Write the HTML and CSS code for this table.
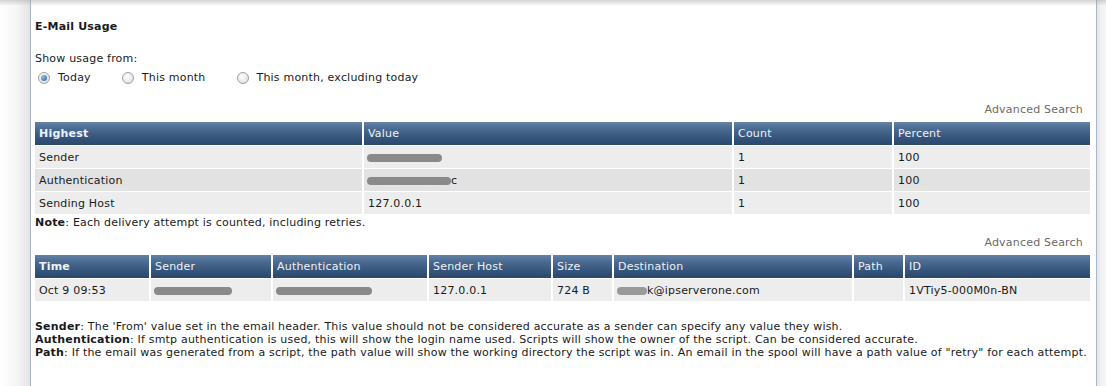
FILE: index.html
```html
<!DOCTYPE html>
<html>
<head>
<meta charset="utf-8">
<link rel="stylesheet" href="styles.css">
</head>
<body>
<div class="page">
  <div class="gutter-left"></div>
  <div class="panel">
    <div class="title">E-Mail Usage</div>
    <div class="label">Show usage from:</div>
    <div class="radios">
      <label class="radio"><span class="dot checked"></span>Today</label>
      <label class="radio"><span class="dot"></span>This month</label>
      <label class="radio"><span class="dot"></span>This month, excluding today</label>
    </div>
    <div class="adv">Advanced Search</div>
    <table class="grid t1">
      <thead>
        <tr><th class="b w1">Highest</th><th class="w2">Value</th><th class="w3">Count</th><th>Percent</th></tr>
      </thead>
      <tbody>
        <tr><td>Sender</td><td><span class="blur" style="width:75px"></span></td><td>1</td><td>100</td></tr>
        <tr class="alt"><td>Authentication</td><td><span class="blur" style="width:84px"></span><span class="tail">c</span></td><td>1</td><td>100</td></tr>
        <tr><td>Sending Host</td><td>127.0.0.1</td><td>1</td><td>100</td></tr>
      </tbody>
    </table>
    <div class="note"><b>Note</b>: Each delivery attempt is counted, including retries.</div>
    <div class="adv adv2">Advanced Search</div>
    <table class="grid t2">
      <thead>
        <tr><th class="b c1">Time</th><th class="c2">Sender</th><th class="c3">Authentication</th><th class="c4">Sender Host</th><th class="c5">Size</th><th class="c6">Destination</th><th class="c7">Path</th><th>ID</th></tr>
      </thead>
      <tbody>
        <tr><td>Oct 9 09:53</td><td><span class="blur" style="width:78px"></span></td><td><span class="blur" style="width:96px"></span></td><td>127.0.0.1</td><td>724 B</td><td><span class="blur short" style="width:30px"></span>k@ipserverone.com</td><td></td><td>1VTiy5-000M0n-BN</td></tr>
      </tbody>
    </table>
    <div class="legend">
      <div><b>Sender</b>: The 'From' value set in the email header. This value should not be considered accurate as a sender can specify any value they wish.</div>
      <div><b>Authentication</b>: If smtp authentication is used, this will show the login name used. Scripts will show the owner of the script. Can be considered accurate.</div>
      <div><b>Path</b>: If the email was generated from a script, the path value will show the working directory the script was in. An email in the spool will have a path value of "retry" for each attempt.</div>
    </div>
  </div>
  <div class="gutter-right"></div>
</div>
</body>
</html>
```
FILE: styles.css
```css
html, body {
  margin: 0;
  padding: 0;
  background: #ffffff;
}
body {
  font-family: "DejaVu Sans", Verdana, sans-serif;
  font-size: 11px;
  letter-spacing: 0.2px;
  color: #1a1a1a;
}
.page {
  display: flex;
  width: 1106px;
  height: 386px;
  overflow: hidden;
  position: relative;
}
.page::before {
  content: "";
  position: absolute;
  left: 0;
  right: 0;
  top: 0;
  height: 6px;
  background: linear-gradient(rgba(160,160,160,0.45), rgba(255,255,255,0));
}
.gutter-left {
  width: 30px;
  flex: none;
  background: linear-gradient(90deg, #ffffff 0%, #f6f6f6 55%, #e4e4e4 100%);
}
.gutter-right {
  flex: 1;
  background: linear-gradient(90deg, #e4e4e4 0%, #f0f0f0 40%, #f6f6f6 100%);
}
.panel {
  width: 1057px;
  flex: none;
  border-left: 1px solid #a7b5c8;
  border-right: 1px solid #a7b5c8;
  padding: 19px 4px 0 4px;
  background: #fff;
}
.title {
  font-weight: bold;
  line-height: 16px;
}
.label {
  margin-top: 16px;
  line-height: 16px;
}
.radios {
  display: flex;
  margin-top: 3px;
  line-height: 16px;
  padding-left: 3px;
}
.radio {
  display: flex;
  align-items: center;
  margin-right: 31px;
}
.dot {
  width: 12px;
  height: 12px;
  border-radius: 50%;
  border: 1px solid #a0a0a0;
  background: radial-gradient(circle at 40% 35%, #ffffff 0%, #e8e8e8 60%, #cfcfcf 100%);
  margin-right: 8px;
  position: relative;
  box-sizing: border-box;
}
.dot.checked::after {
  content: "";
  position: absolute;
  left: 2px;
  top: 2px;
  width: 6px;
  height: 6px;
  border-radius: 50%;
  background: radial-gradient(circle at 35% 35%, #8ec0ea, #1f5f9c);
}
.adv {
  margin-top: 16px;
  line-height: 16px;
  text-align: right;
  color: #6a6a6a;
  padding-right: 9px;
}
.adv2 {
  margin-top: 4px;
}
.grid {
  border-collapse: separate;
  border-spacing: 2px 1px;
  width: calc(100% + 2px);
  margin-left: -2px;
  margin-top: 3px;
}
.grid th {
  text-align: left;
  font-weight: normal;
  color: #eef2f7;
  height: 23px;
  padding: 0 4px;
  background: linear-gradient(#6482a7 0%, #4a6a91 30%, #345479 70%, #2a486c 100%);
  box-sizing: border-box;
}
.grid th.b {
  font-weight: bold;
}
.grid td {
  height: 22px;
  padding: 0 4px;
  background: #ededed;
  box-sizing: border-box;
  white-space: nowrap;
}
.grid tr.alt td {
  background: #e2e2e2;
}
.t1 .w1 { width: 327px; }
.t1 .w2 { width: 368px; }
.t1 .w3 { width: 158px; }
.t2 .c1 { width: 114px; }
.t2 .c2 { width: 120px; }
.t2 .c3 { width: 154px; }
.t2 .c4 { width: 122px; }
.t2 .c5 { width: 59px; }
.t2 .c6 { width: 238px; }
.t2 .c7 { width: 49px; }
.blur {
  display: inline-block;
  height: 8px;
  border-radius: 4px;
  background: #8a8a8a;
  filter: blur(0.6px);
  vertical-align: middle;
  margin-left: -1px;
}
.blur.short {
  background: #9a9a9a;
}
.note {
  line-height: 16px;
}
.legend {
  margin-top: 18px;
  line-height: 13px;
}
```
